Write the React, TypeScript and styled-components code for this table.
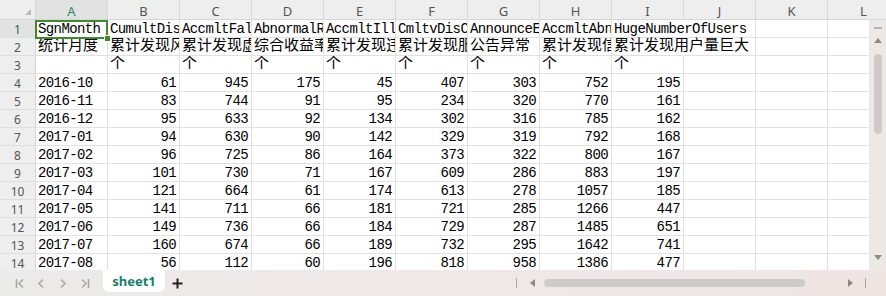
import styled, { createGlobalStyle } from "styled-components";

const COLUMNS = ["A", "B", "C", "D", "E", "F", "G", "H", "I", "J", "K", "L"];

const HEAD_ROW = [
  "SgnMonth",
  "CumultDisRiskCnt",
  "AccmltFalseInfo",
  "AbnormalRevRatio",
  "AccmltIllegalCnt",
  "CmltvDisComplaint",
  "AnnounceException",
  "AccmltAbnormalInfo",
  "HugeNumberOfUsers",
];

const LABEL_ROW = [
  "统计月度",
  "累计发现风险数",
  "累计发现虚假信息",
  "综合收益率异常",
  "累计发现违规数",
  "累计发现服务投诉",
  "公告异常",
  "累计发现信息异常",
  "累计发现用户量巨大",
];

const DATA: [string, ...number[]][] = [
  ["2016-10", 61, 945, 175, 45, 407, 303, 752, 195],
  ["2016-11", 83, 744, 91, 95, 234, 320, 770, 161],
  ["2016-12", 95, 633, 92, 134, 302, 316, 785, 162],
  ["2017-01", 94, 630, 90, 142, 329, 319, 792, 168],
  ["2017-02", 96, 725, 86, 164, 373, 322, 800, 167],
  ["2017-03", 101, 730, 71, 167, 609, 286, 883, 197],
  ["2017-04", 121, 664, 61, 174, 613, 278, 1057, 185],
  ["2017-05", 141, 711, 66, 181, 721, 285, 1266, 447],
  ["2017-06", 149, 736, 66, 184, 729, 287, 1485, 651],
  ["2017-07", 160, 674, 66, 189, 732, 295, 1642, 741],
  ["2017-08", 56, 112, 60, 196, 818, 958, 1386, 477],
];

type TCell = { text: string; num?: boolean; cjk?: boolean };

function buildRows(): TCell[][] {
  const pad = (cells: TCell[]) => [...cells, ...Array(COLUMNS.length - cells.length).fill({ text: "" })];
  const rows: TCell[][] = [];
  rows.push(pad(HEAD_ROW.map((text) => ({ text }))));
  rows.push(pad(LABEL_ROW.map((text) => ({ text, cjk: true }))));
  rows.push(pad([{ text: "" }, ...Array(8).fill({ text: "个", cjk: true })]));
  DATA.forEach(([month, ...nums]) => {
    rows.push(pad([{ text: month }, ...nums.map((n) => ({ text: String(n), num: true }))]));
  });
  return rows;
}

export default function App() {
  const rows = buildRows();

  return (
    <>
      <GlobalStyle />
      <SPage>
        <SHeaderRow>
          <SCorner />
          {COLUMNS.map((c, i) => (
            <SColHead key={c} $active={i === 0} children={c} />
          ))}
        </SHeaderRow>

        <SBody>
          <SGrid>
            {rows.map((cells, r) => (
              <SRow key={r}>
                <SRowHead $active={r === 0} children={r + 1} />
                {cells.map((cell, c) => {
                  // text overflows into the empty column J
                  const spill = c === 8 && r < 2;
                  const selected = r === 0 && c === 0;
                  return (
                    <SCell key={c} $num={cell.num} $cjk={cell.cjk} $spill={spill} $selected={selected}>
                      {cell.text}
                      {selected && (
                        <SSelection>
                          <SFillHandle />
                        </SSelection>
                      )}
                    </SCell>
                  );
                })}
              </SRow>
            ))}
          </SGrid>

          <SVScroll>
            <SVMinus />
            <SArrowUp />
            <SVThumb />
            <SVSpacer />
            <SArrowDown />
          </SVScroll>
        </SBody>

        <STabBar>
          <SNav>
            <NavIcon kind="first" />
            <NavIcon kind="prev" />
            <NavIcon kind="next" />
            <NavIcon kind="last" />
          </SNav>
          <STab children="sheet1" />
          <SPlus>
            <svg width="11" height="11" viewBox="0 0 11 11">
              <path d="M5.5 0.5v10M0.5 5.5h10" stroke="#222" strokeWidth="2" />
            </svg>
          </SPlus>
          <SSpacer />
          <SHScroll>
            <SDivider />
            <SArrowLeft />
            <SHThumb />
            <SArrowRight />
            <SDivider />
          </SHScroll>
        </STabBar>
      </SPage>
    </>
  );
}

function NavIcon(props: { kind: "first" | "prev" | "next" | "last" }) {
  const paths = {
    first: "M1.5 1v9M8 1.5L4 5.5l4 4",
    prev: "M6 1.5L2 5.5l4 4",
    next: "M2 1.5l4 4-4 4",
    last: "M1 1.5l4 4-4 4M7.5 1v9",
  };
  return (
    <SNavIcon>
      <svg width="9" height="11" viewBox="0 0 9 11">
        <path d={paths[props.kind]} stroke="#a9a9a9" strokeWidth="1.6" fill="none" />
      </svg>
    </SNavIcon>
  );
}

// #region Styles

const GlobalStyle = createGlobalStyle`
  html, body {
    margin: 0;
    padding: 0;
    background: #ffffff;
  }
`;

const SPage = styled.div`
  width: 886px;
  height: 296px;
  display: flex;
  flex-direction: column;
  overflow: hidden;
  background: #ffffff;
  font-family: "Liberation Mono", "Noto Sans CJK SC", monospace;
`;

const SHeaderRow = styled.div`
  display: flex;
  height: 20px;
  flex-shrink: 0;
  background: #eeeeee;
  overflow: hidden;
`;

const SCorner = styled.div`
  position: relative;
  width: 36px;
  flex-shrink: 0;
  box-sizing: border-box;
  border-right: 1px solid #d6d6d6;
  border-bottom: 1px solid #d6d6d6;

  &::after {
    content: "";
    position: absolute;
    right: 4px;
    bottom: 4px;
    border-left: 6px solid transparent;
    border-bottom: 6px solid #b9b9b9;
  }
`;

const SColHead = styled.div<{ $active?: boolean }>`
  width: 72px;
  flex-shrink: 0;
  box-sizing: border-box;
  display: flex;
  align-items: center;
  justify-content: center;
  padding-top: 2px;
  border-right: 1px solid #d8d8d8;
  border-bottom: 1px solid #d6d6d6;
  background: ${(p) => (p.$active ? "#e2e2e2" : "#eeeeee")};
  color: ${(p) => (p.$active ? "#1f8a6c" : "#555555")};
  font-family: "Noto Sans", "Liberation Sans", sans-serif;
  font-size: 13px;
`;

const SBody = styled.div`
  flex: 1;
  min-height: 0;
  display: flex;
`;

const SGrid = styled.div`
  flex: 1;
  min-width: 0;
  overflow: hidden;
  background: #ffffff;
`;

const SRow = styled.div`
  display: flex;
  height: 18px;
`;

const SRowHead = styled.div<{ $active?: boolean }>`
  width: 36px;
  flex-shrink: 0;
  box-sizing: border-box;
  display: flex;
  align-items: center;
  justify-content: center;
  padding-top: 1px;
  border-right: 1px solid #d6d6d6;
  border-bottom: 1px solid #dedede;
  background: ${(p) => (p.$active ? "#e2e2e2" : "#eeeeee")};
  color: ${(p) => (p.$active ? "#1d6a5a" : "#555555")};
  font-family: "Noto Sans", "Liberation Sans", sans-serif;
  font-size: 12px;
`;

const SCell = styled.div<{ $num?: boolean; $cjk?: boolean; $spill?: boolean; $selected?: boolean }>`
  position: relative;
  width: 72px;
  flex-shrink: 0;
  box-sizing: border-box;
  display: flex;
  align-items: flex-end;
  justify-content: ${(p) => (p.$num ? "flex-end" : "flex-start")};
  padding: 0 3px 0 2px;
  border-right: 1px solid ${(p) => (p.$spill ? "transparent" : "#e1e1e1")};
  border-bottom: 1px solid #e1e1e1;
  white-space: nowrap;
  overflow: ${(p) => (p.$spill || p.$selected ? "visible" : "hidden")};
  z-index: ${(p) => (p.$selected ? 3 : p.$spill ? 1 : 0)};
  color: #000000;
  font-size: ${(p) => (p.$cjk ? "15px" : "14px")};
  letter-spacing: ${(p) => (p.$cjk ? "0" : "-0.6px")};
  line-height: 16px;
`;

const SSelection = styled.div`
  position: absolute;
  left: -1px;
  top: 0;
  right: -1px;
  bottom: -2px;
  border: 2px solid #3f8a2c;
  pointer-events: none;
`;

const SFillHandle = styled.div`
  position: absolute;
  right: -5px;
  bottom: -5px;
  width: 5px;
  height: 5px;
  background: #3f8a2c;
  border: 1px solid #ffffff;
`;

const SVScroll = styled.div`
  width: 17px;
  flex-shrink: 0;
  display: flex;
  flex-direction: column;
  align-items: center;
  background: #ece8e6;
`;

const SVMinus = styled.div`
  width: 8px;
  height: 2px;
  margin-top: 7px;
  background: #b8b4b3;
`;

const SArrowUp = styled.div`
  margin-top: 9px;
  border-left: 4px solid transparent;
  border-right: 4px solid transparent;
  border-bottom: 5px solid #8e8a89;
`;

const SVThumb = styled.div`
  width: 8px;
  height: 80px;
  margin-top: 11px;
  border-radius: 4px;
  background: #cfcbca;
`;

const SVSpacer = styled.div`
  flex: 1;
`;

const SArrowDown = styled.div`
  margin-bottom: 10px;
  border-left: 4px solid transparent;
  border-right: 4px solid transparent;
  border-top: 5px solid #8e8a89;
`;

const STabBar = styled.div`
  height: 26px;
  flex-shrink: 0;
  display: flex;
  align-items: center;
  background: linear-gradient(90deg, #ebebea 0%, #efe8e7 45%, #efe6e4 100%);
`;

const SNav = styled.div`
  display: flex;
  align-items: center;
  gap: 13px;
  padding-left: 15px;
  width: 88px;
`;

const SNavIcon = styled.span`
  display: flex;
  width: 9px;
`;

const STab = styled.div`
  align-self: flex-start;
  width: 62px;
  height: 22px;
  display: flex;
  align-items: center;
  justify-content: center;
  background: #ffffff;
  border-radius: 0 0 6px 6px;
  color: #15806c;
  font-family: "Noto Sans", "Liberation Sans", sans-serif;
  font-weight: 700;
  font-size: 13px;
`;

const SPlus = styled.div`
  display: flex;
  margin-left: 7px;
  padding-top: 1px;
`;

const SSpacer = styled.div`
  flex: 1;
`;

const SHScroll = styled.div`
  display: flex;
  align-items: center;
  margin-right: 20px;
`;

const SDivider = styled.div`
  width: 1px;
  height: 10px;
  background: #a8a4a3;
`;

const SArrowLeft = styled.div`
  margin-left: 13px;
  border-top: 4px solid transparent;
  border-bottom: 4px solid transparent;
  border-right: 5px solid #8e8a89;
`;

const SHThumb = styled.div`
  width: 261px;
  height: 8px;
  margin-left: 9px;
  border-radius: 4px;
  background: #cfcbca;
`;

const SArrowRight = styled.div`
  margin-left: 43px;
  margin-right: 12px;
  border-top: 4px solid transparent;
  border-bottom: 4px solid transparent;
  border-left: 5px solid #8e8a89;
`;

// #endregion
